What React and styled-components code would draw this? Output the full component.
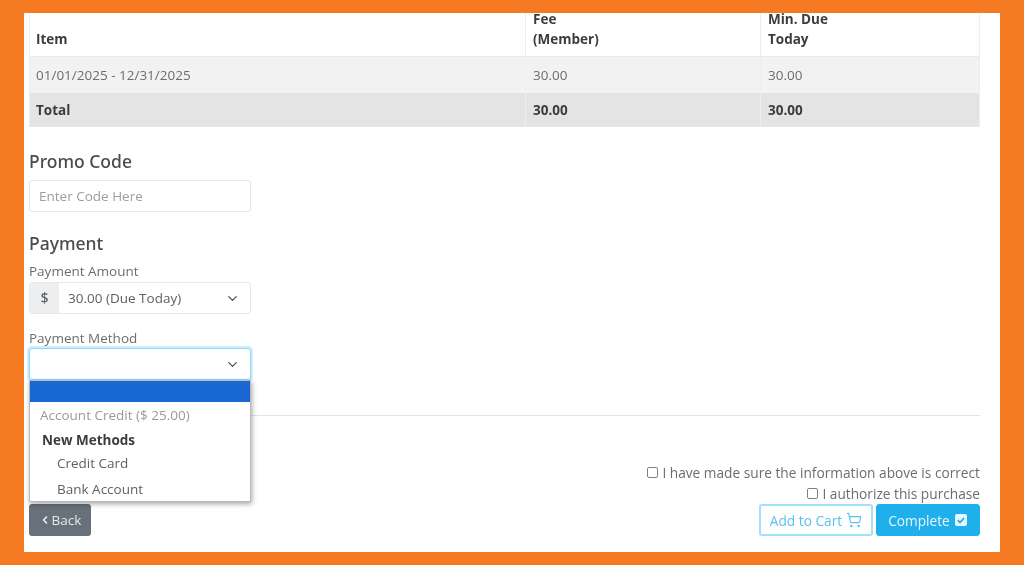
import React from 'react';
import styled, { createGlobalStyle } from 'styled-components';
import { ChevronDown, ChevronLeft, ShoppingCart } from 'lucide-react';

const Global = createGlobalStyle`
	html, body {
		margin: 0;
		height: 100%;
		background: #f67a22;
	}
	body {
		font-family: 'Open Sans', sans-serif;
		font-size: 13.5px;
		color: #55595c;
	}
	* {
		box-sizing: border-box;
	}
`;

const Panel = styled.div`
	width: 976px;
	height: 539px;
	margin: 13px 0 0 24px;
	padding: 0 20px 16px 5px;
	background: #fff;
	overflow: hidden;
	display: flex;
	flex-direction: column;
	filter: blur(0.35px);
`;

const Row = styled.div`
	flex: none;
	display: grid;
	grid-template-columns: 496px 235px 220px;
	grid-template-rows: 1fr;
	height: ${(p) => p.$height}px;
	background: ${(p) => p.$bg};
	border-bottom: 1px solid ${(p) => p.$line};
	font-weight: ${(p) => (p.$bold ? 700 : 400)};
	color: ${(p) => (p.$bold ? '#3a3d40' : '#6a6e71')};
`;

const Cell = styled.div`
	min-height: 0;
	display: flex;
	align-items: ${(p) => (p.$head ? 'flex-end' : 'center')};
	padding: ${(p) => (p.$head ? '0 7px 7px' : '0 7px')};
	line-height: 20px;
	border-left: 1px solid #eceef0;
	&:first-child {
		padding-left: 6px;
	}
	&:last-child {
		border-right: 1px solid #eceef0;
	}
`;

const Heading = styled.h4`
	margin: ${(p) => p.$top}px 0 8px;
	font-family: 'Noto Sans', sans-serif;
	font-size: 17.5px;
	line-height: 22px;
	font-weight: 500;
	color: #484c4f;
`;

const Field = styled.div`
	width: 222px;
	height: 32px;
	display: flex;
	align-items: stretch;
	background: #fff;
	border: 1px solid ${(p) => (p.$focus ? '#8fd8f7' : '#e6e8ea')};
	border-radius: 3px;
	box-shadow: ${(p) => (p.$focus ? '0 0 0 2px #cdeefc' : 'none')};
	color: #5d6164;
`;

const Placeholder = styled.div`
	padding-left: 9px;
	display: flex;
	align-items: center;
	color: #9a9ea3;
`;

const Addon = styled.div`
	width: 29px;
	display: flex;
	align-items: center;
	justify-content: center;
	background: #eceef0;
	font-weight: 600;
	border-radius: 3px 0 0 3px;
`;

const Value = styled.div`
	flex: 1;
	padding-left: 9px;
	display: flex;
	align-items: center;
`;

const Arrow = styled(ChevronDown)`
	align-self: center;
	margin-right: 10px;
	color: #4a4e51;
`;

const Label = styled.div`
	margin-top: ${(p) => p.$top}px;
	margin-bottom: ${(p) => p.$bottom}px;
	line-height: 18px;
	color: #6a6e71;
`;

const SelectWrap = styled.div`
	position: relative;
	width: 222px;
`;

const Menu = styled.div`
	position: absolute;
	z-index: 2;
	top: 32px;
	left: 0;
	width: 222px;
	height: 122px;
	background: #fff;
	border: 1px solid #b9bbbd;
	box-shadow: 1px 2px 5px rgba(0, 0, 0, 0.35);
`;

const MenuItem = styled.div`
	height: ${(p) => p.$height}px;
	display: flex;
	align-items: center;
	padding-left: ${(p) => p.$indent}px;
	background: ${(p) => (p.$selected ? '#1967d2' : 'transparent')};
	color: ${(p) => p.$color || '#5d6164'};
	font-weight: ${(p) => (p.$bold ? 700 : 400)};
`;

const Divider = styled.hr`
	width: 100%;
	margin: 35px 0 0;
	border: 0;
	border-top: 1px solid #e3e4e5;
`;

const Footer = styled.div`
	margin-top: auto;
	display: flex;
	justify-content: space-between;
	align-items: flex-end;
`;

const BackButton = styled.button`
	width: 62px;
	height: 32px;
	padding: 0;
	display: flex;
	align-items: center;
	justify-content: center;
	gap: 1px;
	border: 0;
	border-radius: 3px;
	background: #687079;
	color: #e6e8ea;
	font: inherit;
`;

const Right = styled.div`
	display: flex;
	flex-direction: column;
	align-items: flex-end;
`;

const Check = styled.label`
	display: flex;
	align-items: center;
	gap: 4px;
	height: 21px;
	font-size: 13.7px;
	color: #6a6e71;
	white-space: nowrap;
`;

const Box = styled.span`
	width: 11px;
	height: 11px;
	border: 1px solid #808080;
	border-radius: 2px;
	background: #fff;
`;

const Buttons = styled.div`
	display: flex;
	gap: 3px;
`;

const Action = styled.button`
	height: 32px;
	width: ${(p) => p.$width}px;
	padding: 0;
	display: flex;
	align-items: center;
	justify-content: center;
	gap: 4px;
	border: ${(p) => (p.$solid ? '1px solid #1fb0ec' : '2px solid #a3e0f9')};
	border-radius: 3px;
	background: ${(p) => (p.$solid ? '#1fb0ec' : '#fff')};
	color: ${(p) => (p.$solid ? '#e6f7fe' : '#5cc0ee')};
	font: inherit;
	font-size: 13.7px;
`;

export default function App() {
	return (
		<>
			<Global />
			<Panel>
				<Row $height={44} $bg="#fff" $line="#e8eaec" $bold>
					<Cell $head>Item</Cell>
					<Cell $head>Fee<br />(Member)</Cell>
					<Cell $head>Min. Due<br />Today</Cell>
				</Row>
				<Row $height={36} $bg="#f2f2f2" $line="#f2f2f2">
					<Cell>01/01/2025 - 12/31/2025</Cell>
					<Cell>30.00</Cell>
					<Cell>30.00</Cell>
				</Row>
				<Row $height={34} $bg="#e4e4e4" $line="#e8e8e8" $bold>
					<Cell>Total</Cell>
					<Cell>30.00</Cell>
					<Cell>30.00</Cell>
				</Row>

				<Heading $top={23}>Promo Code</Heading>
				<Field>
					<Placeholder>Enter Code Here</Placeholder>
				</Field>

				<Heading $top={20}>Payment</Heading>
				<Label $top={0} $bottom={2}>Payment Amount</Label>
				<Field>
					<Addon>$</Addon>
					<Value>30.00 (Due Today)</Value>
					<Arrow size={15} strokeWidth={2} />
				</Field>

				<Label $top={15} $bottom={1}>Payment Method</Label>
				<SelectWrap>
					<Field $focus>
						<Value />
						<Arrow size={15} strokeWidth={2} />
					</Field>
					<Menu>
						<MenuItem $selected $height={21} />
						<MenuItem $height={26} $indent={10} $color="#9a9a9a">Account Credit ($ 25.00)</MenuItem>
						<MenuItem $height={23} $indent={12} $color="#3a3d40" $bold>New Methods</MenuItem>
						<MenuItem $height={24} $indent={27}>Credit Card</MenuItem>
						<MenuItem $height={27} $indent={27}>Bank Account</MenuItem>
					</Menu>
				</SelectWrap>

				<Divider />

				<Footer>
					<BackButton>
						<ChevronLeft size={12} strokeWidth={3.5} />
						Back
					</BackButton>
					<Right>
						<Check><Box />I have made sure the information above is correct</Check>
						<Check><Box />I authorize this purchase</Check>
						<Buttons>
							<Action $width={114}>
								Add to Cart
								<ShoppingCart size={16} strokeWidth={1.75} />
							</Action>
							<Action $solid $width={104}>
								Complete
								<svg width="14" height="14" viewBox="0 0 14 14">
									<rect x="1" y="1" width="12" height="12" rx="2" fill="#e6f7fe" />
									<path d="M3.8 7.2l2.2 2.2 4.2-4.4" fill="none" stroke="#1fb0ec" strokeWidth="1.8" />
								</svg>
							</Action>
						</Buttons>
					</Right>
				</Footer>
			</Panel>
		</>
	);
}
